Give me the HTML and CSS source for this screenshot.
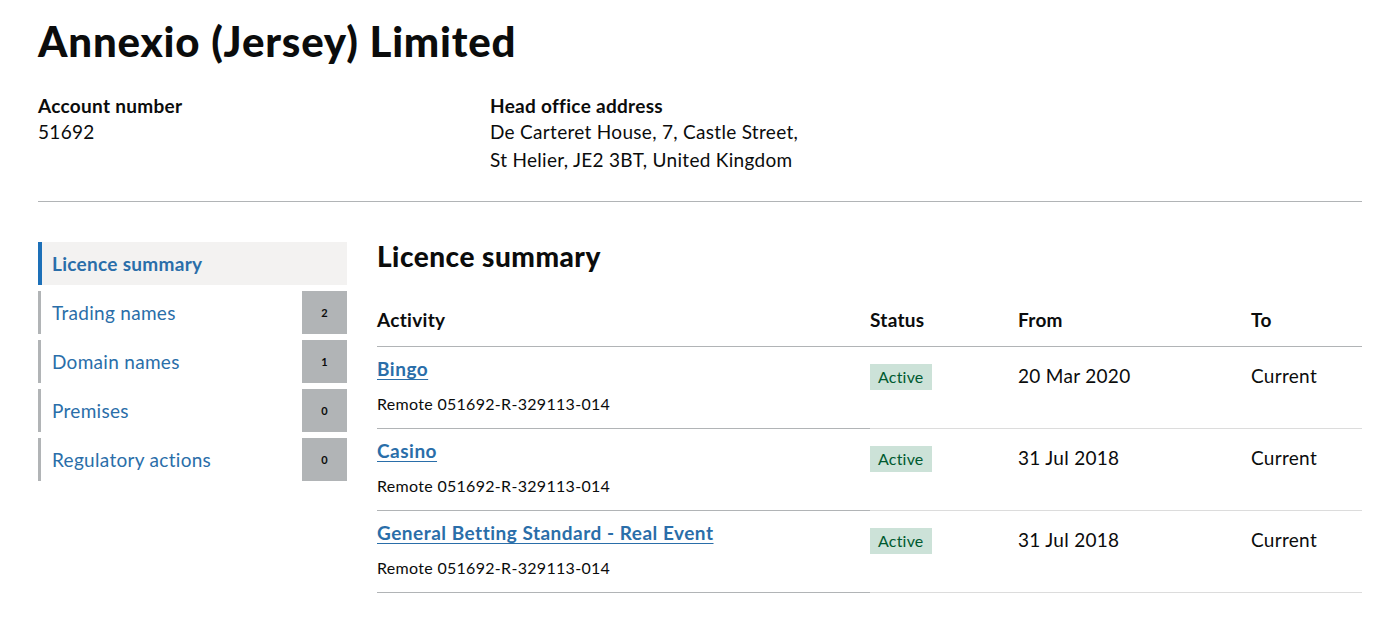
FILE: index.html
```html
<!DOCTYPE html>
<html lang="en">
<head>
  <meta charset="UTF-8" />
  <title>Annexio (Jersey) Limited</title>
  <link rel="stylesheet" href="styles.css">
</head>
<body>
  <div class="page">
    <h1 class="title">Annexio (Jersey) Limited</h1>

    <div class="details">
      <div class="detail detail-account">
        <div class="detail-label">Account number</div>
        <div class="detail-value">51692</div>
      </div>
      <div class="detail">
        <div class="detail-label">Head office address</div>
        <div class="detail-value">De Carteret House, 7, Castle Street,<br>St Helier, JE2 3BT, United Kingdom</div>
      </div>
    </div>

    <hr class="divider">

    <div class="layout">
      <nav class="sidenav">
        <a class="nav-item active" href="#">Licence summary</a>
        <a class="nav-item" href="#"><span>Trading names</span><span class="count">2</span></a>
        <a class="nav-item" href="#"><span>Domain names</span><span class="count">1</span></a>
        <a class="nav-item" href="#"><span>Premises</span><span class="count">0</span></a>
        <a class="nav-item" href="#"><span>Regulatory actions</span><span class="count">0</span></a>
      </nav>

      <main class="content">
        <h2 class="section-title">Licence summary</h2>
        <table class="licences">
          <thead>
            <tr>
              <th class="col-activity">Activity</th>
              <th class="col-status">Status</th>
              <th class="col-from">From</th>
              <th class="col-to">To</th>
            </tr>
          </thead>
          <tbody>
            <tr>
              <td class="cell-activity"><a href="#">Bingo</a><div class="ref">Remote 051692-R-329113-014</div></td>
              <td><span class="tag">Active</span></td>
              <td>20 Mar 2020</td>
              <td>Current</td>
            </tr>
            <tr>
              <td class="cell-activity"><a href="#">Casino</a><div class="ref">Remote 051692-R-329113-014</div></td>
              <td><span class="tag">Active</span></td>
              <td>31 Jul 2018</td>
              <td>Current</td>
            </tr>
            <tr>
              <td class="cell-activity"><a href="#">General Betting Standard - Real Event</a><div class="ref">Remote 051692-R-329113-014</div></td>
              <td><span class="tag">Active</span></td>
              <td>31 Jul 2018</td>
              <td>Current</td>
            </tr>
          </tbody>
        </table>
      </main>
    </div>
  </div>
</body>
</html>
```

FILE: styles.css
```css
body {
  margin: 0;
  background: #fff;
  color: #0b0c0c;
  font-family: Lato, "Noto Sans", sans-serif;
  letter-spacing: 0.3px;
}
.page {
  padding: 0 38px;
}
.title {
  margin: 0;
  padding-top: 17px;
  font-size: 42px;
  line-height: 48px;
  font-weight: 900;
  letter-spacing: 0.8px;
}
.details {
  display: flex;
  margin-top: 29px;
}
.detail {
  font-size: 19px;
  line-height: 28px;
}
.detail-account {
  width: 452px;
}
.detail-label {
  font-weight: 700;
  line-height: 24px;
}
.detail-value {
  line-height: 28px;
}
.divider {
  border: none;
  border-top: 1px solid #b1b4b6;
  margin: 27px 0 40px;
}
.layout {
  display: flex;
  gap: 30px;
}
.sidenav {
  width: 309px;
  flex: none;
  display: flex;
  flex-direction: column;
  gap: 6px;
}
.nav-item {
  display: flex;
  justify-content: space-between;
  align-items: stretch;
  height: 43px;
  border-left: 3px solid #b1b4b6;
  color: #2a6ea9;
  text-decoration: none;
  font-size: 19px;
}
.nav-item span:first-child {
  padding-left: 11px;
  line-height: 43px;
}
.nav-item.active {
  border-left: 4px solid #1d70b8;
  background: #f3f2f1;
  font-weight: 700;
  padding-left: 10px;
  line-height: 43px;
}
.count {
  width: 45px;
  background: #b1b4b6;
  color: #0b0c0c;
  font-size: 11px;
  font-weight: 700;
  display: flex;
  align-items: center;
  justify-content: center;
}
.content {
  flex: 1;
}
.section-title {
  margin: 0;
  font-size: 28px;
  line-height: 28px;
  font-weight: 900;
  letter-spacing: 0.5px;
}
.licences {
  width: 100%;
  border-collapse: collapse;
  margin-top: 30px;
}
.licences th {
  text-align: left;
  font-size: 19px;
  font-weight: 700;
  padding: 8px 0 15px;
  border-bottom: 1px solid #b1b4b6;
}
.col-activity { width: 493px; }
.col-status { width: 148px; }
.col-from { width: 233px; }
.licences td {
  vertical-align: top;
  font-size: 19px;
  line-height: 24px;
  padding: 17px 0 14px;
  border-bottom: 1px solid #dcdcdc;
}
.licences td.cell-activity {
  padding-top: 10px;
  border-bottom-color: #b1b4b6;
}
.cell-activity a {
  color: #2a6ea9;
  font-weight: 700;
  letter-spacing: 0.5px;
  text-decoration: underline;
  text-underline-offset: 3px;
}
.ref {
  font-size: 16px;
  line-height: 20px;
  margin-top: 13px;
}
.tag {
  display: inline-block;
  background: #cce2d8;
  color: #005a30;
  font-size: 16px;
  line-height: 26px;
  padding: 0 8px;
  margin-top: -5px;
  letter-spacing: 0.2px;
}
```
